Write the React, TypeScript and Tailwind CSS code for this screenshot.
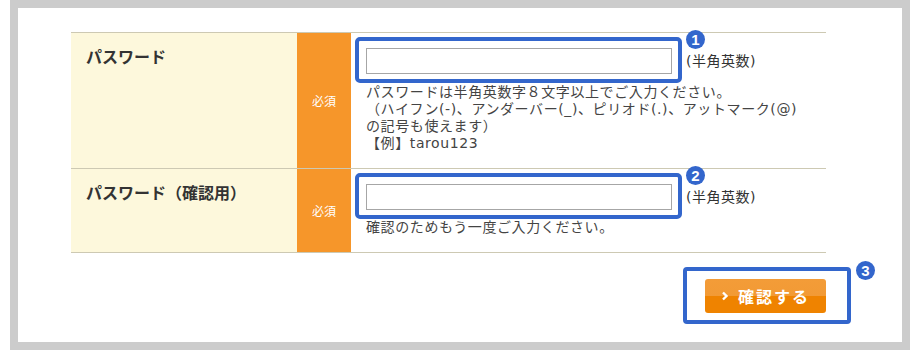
import React from "react";

const jp = "font-['Noto_Sans_CJK_JP','Noto_Sans_CJK_SC',sans-serif]";
const desc = "font-['DejaVu_Sans','Noto_Sans_CJK_JP',sans-serif]";

function Badge({ n, className }: { n: string; className: string }) {
  return (
    <div
      className={`absolute w-[19px] h-[19px] rounded-full bg-[#3366cc] text-white flex items-center justify-center text-[15px] font-bold leading-none font-['Liberation_Sans',sans-serif] ${className}`}
    >
      {n}
    </div>
  );
}

function InputRow({ n }: { n: string }) {
  return (
    <div className="flex items-center">
      <div className="relative">
        <input
          type="text"
          className="block w-[306px] h-[26px] border border-[#a6a6a6] bg-white outline-none"
        />
        <div className="absolute left-[-11px] top-[-11px] w-[327px] h-[46px] border-4 border-[#3366cc] rounded-[5px] pointer-events-none" />
        <Badge n={n} className="left-[320px] top-[-18px]" />
      </div>
      <span className={`ml-[14px] text-[14px] text-[#333] tracking-[0.5px] ${desc}`}>(半角英数)</span>
    </div>
  );
}

function Row({
  label,
  top,
  children,
}: {
  label: string;
  top?: boolean;
  children: React.ReactNode;
}) {
  return (
    <div
      className={`grid grid-cols-[226px_54px_1fr] border-b border-[#cdc9b3] ${top ? "border-t" : ""}`}
    >
      <div className={`bg-[#fdf8dc] pl-[15px] pt-[15px] text-[16px] leading-[16px] font-bold text-[#333] ${jp}`}>
        {label}
      </div>
      <div className={`bg-[#f6962a] flex items-center justify-center text-white text-[12px] ${jp}`}>
        必須
      </div>
      <div className="pl-[15px] pr-[15px] pt-[15px] pb-[16px] bg-white">{children}</div>
    </div>
  );
}

export default function App() {
  return (
    <div className="w-[920px] h-[350px] bg-white pl-[10px]">
      <div className="w-[900px] h-[350px] border-8 border-[#cccccc] bg-white">
        <div className="ml-[53px] mt-[24px] w-[755px]">
          <Row label="パスワード" top>
            <InputRow n="1" />
            <div className={`mt-[10px] text-[14px] leading-[17px] text-[#444] tracking-[0.6px] whitespace-nowrap ${desc}`}>
              <div>パスワードは半角英数字８文字以上でご入力ください。</div>
              <div>（ハイフン(-)、アンダーバー(_)、ピリオド(.)、アットマーク(@)</div>
              <div>の記号も使えます）</div>
              <div>【例】tarou123</div>
            </div>
          </Row>
          <Row label="パスワード（確認用）">
            <InputRow n="2" />
            <div className={`mt-[9px] text-[14px] leading-[17px] text-[#444] tracking-[0.6px] whitespace-nowrap ${desc}`}>
              確認のためもう一度ご入力ください。
            </div>
          </Row>
          <div className="flex justify-end mt-[26px]">
            <div className="relative">
              <button
                type="button"
                className={`w-[121px] h-[34px] rounded-[3px] bg-[linear-gradient(to_bottom,#f39c38_0%,#f29a35_50%,#ef8300_50%,#ef8300_100%)] flex items-center justify-center text-white text-[16px] font-bold tracking-[2px] ${jp}`}
              >
                <svg width="8" height="10" viewBox="0 0 8 10" className="mr-[9px]">
                  <polyline points="2,1.5 5.5,5 2,8.5" fill="none" stroke="white" strokeWidth="2.4" />
                </svg>
                確認する
              </button>
              <div className="absolute left-[-22px] top-[-12px] w-[168px] h-[57px] border-4 border-[#3366cc] rounded-[4px] pointer-events-none" />
              <Badge n="3" className="left-[151px] top-[-18px]" />
            </div>
          </div>
        </div>
      </div>
    </div>
  );
}
